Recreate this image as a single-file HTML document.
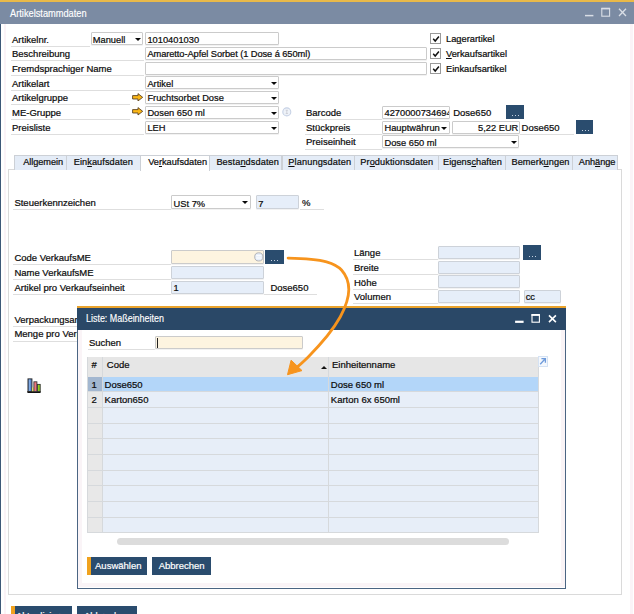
<!DOCTYPE html><html><head><meta charset='utf-8'><title>Artikelstammdaten</title><style>
html,body{margin:0;padding:0;}
body{width:634px;height:614px;position:relative;overflow:hidden;background:#fff;font-family:"Liberation Sans",sans-serif;font-size:9.5px;color:#0c0c0c;-webkit-text-stroke:0.22px #0c0c0c;}
div,span{position:absolute;box-sizing:border-box;white-space:nowrap;}
u{text-decoration:underline;}
.t{line-height:12px;height:12px;}
.ul{height:1px;background:#dedede;}
.f{border:1px solid #cbcbcb;background:#fff;border-radius:1px;height:13px;line-height:11px;padding-left:1.2px;padding-top:1.4px;font-size:9.3px;overflow:hidden;box-shadow:0 1px 0 rgba(0,0,0,0.05);}
.fb{background:#e6eef9;border-color:#cdd2d9;}
.fc{background:#fdf4e0;}
.dd:before{content:"";position:absolute;right:0;top:0;width:8.6px;height:100%;background:#fff;}
.dd:after{content:"";position:absolute;right:1.5px;top:5.1px;border-left:3px solid transparent;border-right:3px solid transparent;border-top:3.7px solid #0a0a0a;}
.btn{background:#2a4c6e;color:#fff;text-align:center;-webkit-text-stroke:0.2px #fff;}
.dots{background:#2a4c6e;}
.dots i{position:absolute;left:6px;bottom:3px;width:1px;height:1px;background:#c3cfdf;box-shadow:3px 0 0 #c3cfdf,6px 0 0 #c3cfdf;}
.cb{width:11px;height:11px;border:1px solid #9a9a9a;background:#fff;}
.tab{top:154.6px;height:15.2px;background:#e4ecf7;border:1px solid #ccd0d6;border-bottom:none;text-align:left;padding-left:7px;line-height:13.5px;font-size:9.2px;}
</style></head><body>
<div style="left:0;top:0;width:634px;height:23.7px;background:#7b8ba3"></div>
<div style="left:0;top:0;width:634px;height:1.8px;background:#e9b949"></div>
<div style="left:0;top:23.7px;width:1px;height:600px;background:#3d5878"></div>
<div style="left:3.8px;top:24px;width:1.9px;height:600px;background:#fbf3f7"></div>
<div style="left:630px;top:24px;width:3px;height:600px;background:#fbf3f7"></div>
<div class="t" style="left:10px;top:7.3px;color:#fff;font-size:10.5px;transform:scaleX(0.881);transform-origin:0 0;-webkit-text-stroke:0.15px #fff;">Artikelstammdaten</div>
<svg style="position:absolute;left:580px;top:4px" width="50" height="16" viewBox="580 4 50 16"><g stroke="#d9dee6" fill="none"><path d="M585 15.6H593.4" stroke-width="1.5"/><rect x="601.8" y="8.6" width="7.8" height="7.6" stroke-width="1.1"/><path d="M601.3 8.5H610.1" stroke-width="1.6"/><path d="M619 8.8L626 16M626 8.8L619 16" stroke-width="1.3"/></g></svg>
<div class="t" style="left:12px;top:33.5px">Artikelnr.</div>
<div class="ul" style="left:11px;top:45.6px;width:79px"></div>
<div class="t" style="left:12px;top:48.2px">Beschreibung</div>
<div class="ul" style="left:11px;top:60.3px;width:133px"></div>
<div class="t" style="left:12px;top:62.9px">Fremdsprachiger Name</div>
<div class="ul" style="left:11px;top:75.0px;width:133px"></div>
<div class="t" style="left:12px;top:77.6px">Artikelart</div>
<div class="ul" style="left:11px;top:89.7px;width:133px"></div>
<div class="t" style="left:12px;top:92.3px">Artikelgruppe</div>
<div class="ul" style="left:11px;top:104.4px;width:119px"></div>
<div class="t" style="left:12px;top:107.0px">ME-Gruppe</div>
<div class="ul" style="left:11px;top:119.1px;width:119px"></div>
<div class="t" style="left:12px;top:121.7px">Preisliste</div>
<div class="ul" style="left:11px;top:133.8px;width:133px"></div>
<div class="f dd" style="left:91.4px;top:32.3px;width:51.8px;padding-left:0.4px">Manuell</div>
<div class="f" style="left:145.2px;top:32.3px;width:134px">1010401030</div>
<div class="f" style="left:145.2px;top:47.0px;width:282.2px"><span style="position:static;letter-spacing:-0.08px">Amaretto-Apfel Sorbet (1 Dose á 650ml)</span></div>
<div class="f" style="left:145.2px;top:61.699999999999996px;width:282.2px"></div>
<div class="f dd" style="left:145.2px;top:76.4px;width:134px">Artikel</div>
<div class="f dd" style="left:145.2px;top:91.1px;width:134px">Fruchtsorbet Dose</div>
<div class="f dd" style="left:145.2px;top:105.8px;width:134px">Dosen 650 ml</div>
<div class="f dd" style="left:145.2px;top:120.5px;width:134px">LEH</div>
<svg style="position:absolute;left:132px;top:92.7px" width="11.4" height="8.6" viewBox="0 0 11.4 8.6"><path d="M0.6 2.6H6V0.6L10.7 4.3L6 8V6H0.6Z" fill="#fbb716" stroke="#5c4424" stroke-width="0.9" stroke-linejoin="round"/></svg>
<svg style="position:absolute;left:132px;top:107.4px" width="11.4" height="8.6" viewBox="0 0 11.4 8.6"><path d="M0.6 2.6H6V0.6L10.7 4.3L6 8V6H0.6Z" fill="#fbb716" stroke="#5c4424" stroke-width="0.9" stroke-linejoin="round"/></svg>
<svg style="position:absolute;left:282px;top:107px" width="10" height="10" viewBox="0 0 10 10"><circle cx="4.8" cy="4.9" r="4" fill="#eef2f8" stroke="#c6d1e5" stroke-width="1.1"/><path d="M3.7 3.3H5.9M3.7 6.5H5.9M4.8 3.3V6.5" stroke="#c4c6cf" stroke-width="0.7"/></svg>
<div class="cb" style="left:430.3px;top:33.1px"><svg style="position:absolute;left:0.6px;top:0.8px" width="8" height="8" viewBox="0 0 8 8"><path d="M1.2 3.8L3.2 6L6.9 1.6" stroke="#111" stroke-width="1.5" fill="none"/></svg></div>
<div class="t" style="left:446px;top:32.9px;font-size:9.3px">La<u>g</u>erartikel</div>
<div class="cb" style="left:430.3px;top:48.0px"><svg style="position:absolute;left:0.6px;top:0.8px" width="8" height="8" viewBox="0 0 8 8"><path d="M1.2 3.8L3.2 6L6.9 1.6" stroke="#111" stroke-width="1.5" fill="none"/></svg></div>
<div class="t" style="left:446px;top:47.8px;font-size:9.3px"><u>V</u>erkaufsartikel</div>
<div class="cb" style="left:430.3px;top:63.0px"><svg style="position:absolute;left:0.6px;top:0.8px" width="8" height="8" viewBox="0 0 8 8"><path d="M1.2 3.8L3.2 6L6.9 1.6" stroke="#111" stroke-width="1.5" fill="none"/></svg></div>
<div class="t" style="left:446px;top:62.8px;font-size:9.3px">Einkaufsartikel</div>
<div class="t" style="left:306px;top:107.0px">Barcode</div>
<div class="ul" style="left:304.5px;top:119.1px;width:77px"></div>
<div class="t" style="left:306px;top:121.7px">Stückpreis</div>
<div class="ul" style="left:304.5px;top:133.8px;width:77px"></div>
<div class="t" style="left:306px;top:136.4px">Preiseinheit</div>
<div class="ul" style="left:304.5px;top:148.5px;width:77px"></div>
<div class="f" style="left:382.3px;top:105.8px;width:67.5px">4270000734694</div>
<div class="t" style="left:453.2px;top:107.0px">Dose650</div>
<div class="dots" style="left:506.2px;top:105.4px;width:18px;height:14px"><i></i></div>
<div class="f dd" style="left:382.3px;top:120.5px;width:67.5px">Hauptwährung</div>
<div class="f" style="left:451.5px;top:120.5px;width:68px;text-align:right;padding-right:0.2px">5,22 EUR</div>
<div class="t" style="left:521.6px;top:121.7px">Dose650</div>
<div class="ul" style="left:520px;top:133.8px;width:54px"></div>
<div class="dots" style="left:575.6px;top:120.2px;width:17.8px;height:13.8px"><i></i></div>
<div class="f dd" style="left:382.3px;top:135.2px;width:137.2px">Dose 650 ml</div>
<div style="left:7.6px;top:169.2px;width:614px;height:425.8px;border:1px solid #dadada;background:#fff"></div>
<div class="tab" style="left:14.4px;width:53.0px;padding-left:7.8px;letter-spacing:-0.049px;">Allgemein</div>
<div class="tab" style="left:66.4px;width:74.5px;padding-left:6.3px;letter-spacing:0.082px;">Ein<u>k</u>aufsdaten</div>
<div class="tab" style="left:139.9px;width:70.0px;padding-left:7.3px;letter-spacing:0.004px;background:#fff;height:16.2px;">Ve<u>r</u>kaufsdaten</div>
<div class="tab" style="left:208.9px;width:73.6px;padding-left:6.5px;letter-spacing:0.099px;">Besta<u>n</u>dsdaten</div>
<div class="tab" style="left:281.5px;width:73.2px;padding-left:5.8px;letter-spacing:0.122px;"><u>P</u>lanungsdaten</div>
<div class="tab" style="left:353.7px;width:85.1px;padding-left:5.6px;letter-spacing:0.093px;">Pr<u>o</u>duktionsdaten</div>
<div class="tab" style="left:437.8px;width:68.4px;padding-left:4.2px;letter-spacing:0.051px;">Eigens<u>c</u>haften</div>
<div class="tab" style="left:505.2px;width:67.6px;padding-left:5.3px;letter-spacing:0.072px;">Bemerk<u>u</u>ngen</div>
<div class="tab" style="left:571.8px;width:46.7px;padding-left:6.0px;letter-spacing:-0.028px;">Anh<u>ä</u>nge</div>
<div class="t" style="left:14.4px;top:197.2px">Steuerkennzeichen</div>
<div class="ul" style="left:13px;top:209.2px;width:158px"></div>
<div class="f dd" style="left:171.4px;top:195.2px;width:79.2px;height:14.2px;line-height:12px">USt 7%</div>
<div class="f fb" style="left:256px;top:195.2px;width:43px;height:14.2px;line-height:12px">7</div>
<div class="t" style="left:302px;top:197.2px">%</div>
<div class="ul" style="left:300px;top:209.2px;width:24px"></div>
<div class="t" style="left:14.4px;top:252.0px">Code VerkaufsME</div>
<div class="ul" style="left:13px;top:264.0px;width:158px"></div>
<div class="t" style="left:14.4px;top:266.9px">Name VerkaufsME</div>
<div class="ul" style="left:13px;top:278.9px;width:158px"></div>
<div class="t" style="left:14.4px;top:281.8px">Artikel pro Verkaufseinheit</div>
<div class="ul" style="left:13px;top:293.8px;width:158px"></div>
<div class="f fc" style="left:171.4px;top:250.3px;width:92.3px;height:13.4px"></div>
<svg style="position:absolute;left:254px;top:252px" width="9.6" height="9.8" viewBox="0 0 9.6 9.8"><circle cx="4.8" cy="4.9" r="4.1" fill="#e6eefa" stroke="#b4b4b6" stroke-width="1"/><path d="M2.2 3.8H7.4M2.2 6H7.4" stroke="#fff" stroke-width="1.1"/></svg>
<div class="dots" style="left:265.1px;top:250.4px;width:18.6px;height:14px"><i></i></div>
<div class="f fb" style="left:171.4px;top:265.7px;width:92.3px"></div>
<div class="f fb" style="left:171.4px;top:280.6px;width:92.3px">1</div>
<div class="t" style="left:270.4px;top:281.8px">Dose650</div>
<div class="ul" style="left:264px;top:293.8px;width:52.6px"></div>
<div class="t" style="left:354px;top:247.1px">Länge</div>
<div class="ul" style="left:352.5px;top:259.1px;width:85px"></div>
<div class="f fb" style="left:437.7px;top:245.9px;width:82.5px"></div>
<div class="t" style="left:354px;top:261.8px">Breite</div>
<div class="ul" style="left:352.5px;top:273.8px;width:85px"></div>
<div class="f fb" style="left:437.7px;top:260.6px;width:82.5px"></div>
<div class="t" style="left:354px;top:276.6px">Höhe</div>
<div class="ul" style="left:352.5px;top:288.6px;width:85px"></div>
<div class="f fb" style="left:437.7px;top:275.4px;width:82.5px"></div>
<div class="t" style="left:354px;top:291.3px">Volumen</div>
<div class="ul" style="left:352.5px;top:303.3px;width:85px"></div>
<div class="f fb" style="left:437.7px;top:290.1px;width:82.5px"></div>
<div class="dots" style="left:522.5px;top:245.4px;width:18.6px;height:14.4px"><i></i></div>
<div class="f fb" style="left:523.5px;top:290.1px;width:37.6px">cc</div>
<div class="t" style="left:14.4px;top:313.8px">Verpackungsart</div>
<div class="ul" style="left:13px;top:326px;width:70px"></div>
<div class="t" style="left:14.4px;top:328.3px">Menge pro Verpackung</div>
<div class="ul" style="left:13px;top:340.5px;width:70px"></div>
<svg style="position:absolute;left:27px;top:377.5px" width="14" height="15.5" viewBox="0 0 14 15.5"><rect x="0.4" y="13" width="13.2" height="2" fill="#111"/><rect x="1" y="0.9" width="3.9" height="12.6" fill="#5a8ad0" stroke="#2c2c2c" stroke-width="1"/><rect x="2.1" y="1.6" width="1" height="11.4" fill="#86aee6"/><rect x="5.3" y="9.4" width="1.3" height="4" fill="#f6e84a"/><rect x="6.9" y="3.8" width="3" height="9.8" fill="#f0737b" stroke="#3a3a3a" stroke-width="0.9"/><rect x="10.4" y="6.4" width="2.8" height="7.2" fill="#8fd01f" stroke="#333" stroke-width="0.9"/></svg>
<div class="btn" style="left:11.1px;top:606.3px;width:61.2px;height:19px;line-height:19px;padding-left:3px">Aktualisieren</div>
<div style="left:11.1px;top:606.3px;width:3.9px;height:19px;background:#f0a21e"></div>
<div class="btn" style="left:77.2px;top:606.3px;width:59.5px;height:19px;line-height:19px">Abbrechen</div>
<div style="left:76.8px;top:306px;width:489.5px;height:282.5px;background:#fff;border:1.4px solid #4b6583"></div>
<div style="left:78.2px;top:330px;width:486.7px;height:257px;border:4px solid #faf4f7;border-top:none"></div>
<div style="left:76.8px;top:306px;width:489.5px;height:23.8px;background:#2a4867"></div>
<div style="left:76.8px;top:306px;width:489.5px;height:1.6px;background:#eaa32c"></div>
<div class="t" style="left:86.4px;top:313.4px;color:#fff;font-size:10.4px;transform:scaleX(0.859);transform-origin:0 0;-webkit-text-stroke:0.15px #fff;">Liste: Maßeinheiten</div>
<svg style="position:absolute;left:510px;top:310px" width="50" height="16" viewBox="510 310 50 16"><g stroke="#fff" fill="none"><path d="M515.1 321.8H523.6" stroke-width="2.2"/><rect x="532" y="315" width="7.4" height="7.2" stroke-width="1.1"/><path d="M531.4 314.9H539.9" stroke-width="1.8"/><path d="M549 315.4L555.9 322.1M555.9 315.4L549 322.1" stroke-width="1.6"/></g></svg>
<div class="t" style="left:88.9px;top:336.8px">Suchen</div>
<div class="ul" style="left:87.5px;top:349px;width:67px"></div>
<div class="f fc" style="left:154.8px;top:335.5px;width:148.2px;height:13.9px"></div>
<div style="left:157.4px;top:337.5px;width:0.9px;height:10px;background:#222"></div>
<div style="left:87.6px;top:357.2px;width:450.4px;height:20px;background:#e6e6e6"></div>
<div class="t" style="left:91.5px;top:359.2px">#</div>
<div class="t" style="left:106.8px;top:359.2px">Code</div>
<div class="t" style="left:332px;top:359.2px">Einheitenname</div>
<div style="left:321.4px;top:365.6px;width:0;height:0;border-left:3px solid transparent;border-right:3px solid transparent;border-bottom:3.8px solid #111"></div>
<div style="left:87.6px;top:377px;width:450.4px;height:15px;background:#b3d6f9"></div>
<div style="left:87.6px;top:377px;width:14.8px;height:15px;background:#a3b7d0"></div>
<div style="left:87.6px;top:392px;width:450.4px;height:16px;background:#e7eef8"></div>
<div style="left:87.6px;top:392px;width:14.8px;height:16px;background:#e8e8e8"></div>
<div style="left:87.6px;top:408px;width:450.4px;height:16px;background:#e7eef8"></div>
<div style="left:87.6px;top:408px;width:14.8px;height:16px;background:#e8e8e8"></div>
<div style="left:87.6px;top:424px;width:450.4px;height:15px;background:#e7eef8"></div>
<div style="left:87.6px;top:424px;width:14.8px;height:15px;background:#e8e8e8"></div>
<div style="left:87.6px;top:439px;width:450.4px;height:16px;background:#e7eef8"></div>
<div style="left:87.6px;top:439px;width:14.8px;height:16px;background:#e8e8e8"></div>
<div style="left:87.6px;top:455px;width:450.4px;height:16px;background:#e7eef8"></div>
<div style="left:87.6px;top:455px;width:14.8px;height:16px;background:#e8e8e8"></div>
<div style="left:87.6px;top:471px;width:450.4px;height:15px;background:#e7eef8"></div>
<div style="left:87.6px;top:471px;width:14.8px;height:15px;background:#e8e8e8"></div>
<div style="left:87.6px;top:486px;width:450.4px;height:16px;background:#e7eef8"></div>
<div style="left:87.6px;top:486px;width:14.8px;height:16px;background:#e8e8e8"></div>
<div style="left:87.6px;top:502px;width:450.4px;height:16px;background:#e7eef8"></div>
<div style="left:87.6px;top:502px;width:14.8px;height:16px;background:#e8e8e8"></div>
<div style="left:87.6px;top:518px;width:450.4px;height:15px;background:#e7eef8"></div>
<div style="left:87.6px;top:518px;width:14.8px;height:15px;background:#e8e8e8"></div>
<div style="left:87.6px;top:391px;width:450.4px;height:1px;background:#d6d9dc"></div>
<div style="left:87.6px;top:407px;width:450.4px;height:1px;background:#d6d9dc"></div>
<div style="left:87.6px;top:423px;width:450.4px;height:1px;background:#d6d9dc"></div>
<div style="left:87.6px;top:438px;width:450.4px;height:1px;background:#d6d9dc"></div>
<div style="left:87.6px;top:454px;width:450.4px;height:1px;background:#d6d9dc"></div>
<div style="left:87.6px;top:470px;width:450.4px;height:1px;background:#d6d9dc"></div>
<div style="left:87.6px;top:485px;width:450.4px;height:1px;background:#d6d9dc"></div>
<div style="left:87.6px;top:501px;width:450.4px;height:1px;background:#d6d9dc"></div>
<div style="left:87.6px;top:517px;width:450.4px;height:1px;background:#d6d9dc"></div>
<div style="left:87.6px;top:532px;width:450.4px;height:1px;background:#d6d9dc"></div>
<div style="left:102.2px;top:357.2px;width:1px;height:176.1px;background:#d6d9dc"></div>
<div style="left:328px;top:357.2px;width:1px;height:176.1px;background:#d6d9dc"></div>
<div style="left:87.2px;top:357.2px;width:1px;height:176.1px;background:#d6d9dc"></div>
<div style="left:537.5px;top:357.2px;width:1px;height:176.1px;background:#d6d9dc"></div>
<div class="t" style="left:91.5px;top:378.6px">1</div>
<div class="t" style="left:104.6px;top:378.6px">Dose650</div>
<div class="t" style="left:330.8px;top:378.6px">Dose 650 ml</div>
<div class="t" style="left:91.5px;top:394.3px">2</div>
<div class="t" style="left:104.6px;top:394.3px">Karton650</div>
<div class="t" style="left:330.8px;top:394.3px">Karton 6x 650ml</div>
<svg style="position:absolute;left:538.4px;top:356.4px" width="10" height="11" viewBox="0 0 10 11"><rect x="0.5" y="0.5" width="9" height="10" fill="#f4f8fd" stroke="#d5e2f3" stroke-width="1"/><path d="M2.2 8.2L7.2 2.8M3.4 2.6H7.4V6.8" stroke="#6f9bdb" stroke-width="1.3" fill="none"/></svg>
<div style="left:117.2px;top:537.9px;width:391.6px;height:7.6px;border-radius:3.8px;background:#dcdcdc"></div>
<div class="btn" style="left:87.2px;top:556.8px;width:59.8px;height:18.4px;line-height:18.6px;padding-left:2.4px">Auswählen</div>
<div style="left:87.2px;top:556.8px;width:3.8px;height:18.4px;background:#f0a21e"></div>
<div class="btn" style="left:152px;top:556.8px;width:59.3px;height:18.4px;line-height:18.6px">Abbrechen</div>
<svg style="position:absolute;left:280px;top:250px" width="80" height="130" viewBox="280 250 80 130"><path d="M288.1 258.1C300 258.3 316 258.8 326.5 261.8C334 264 338 266 341.5 270C346 275 348.8 282 348.8 289.6C348.8 298 344 310 340.2 317C333 330 320 345 308.2 356.9C303 362 298 366.5 293.5 370" fill="none" stroke="#f7941d" stroke-width="2.8" stroke-linecap="round"/><path d="M291.1 360.2L302 370.6L287.5 374.7Z" fill="#f7941d" stroke="#f7941d" stroke-width="1" stroke-linejoin="round"/></svg>
</body></html>
